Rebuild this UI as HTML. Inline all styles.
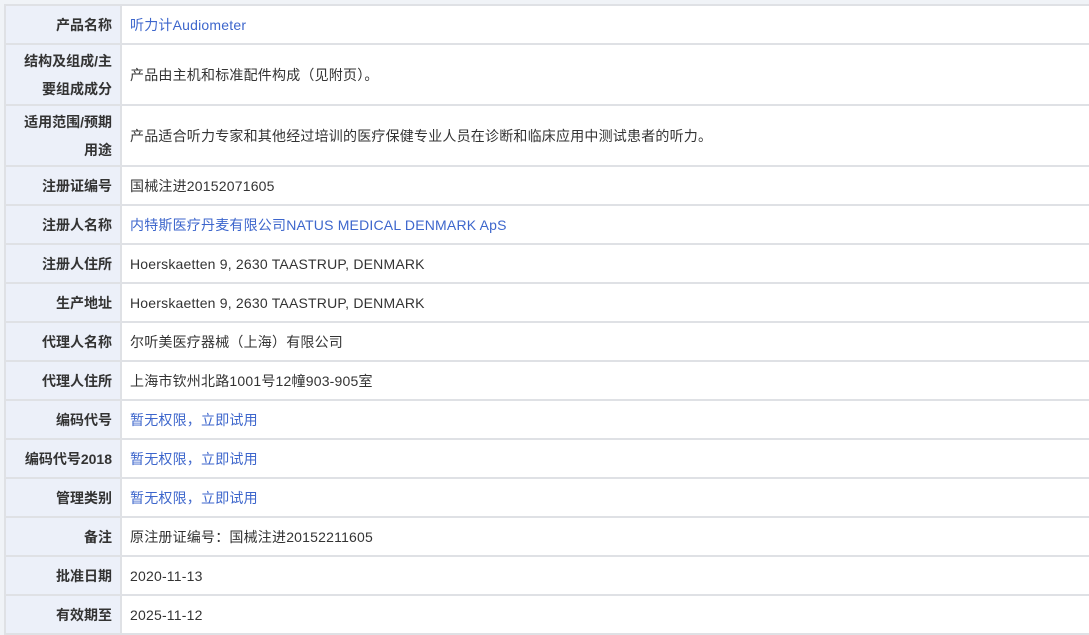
<!DOCTYPE html>
<html><head><meta charset="utf-8"><style>
html,body{margin:0;padding:0;background:#f0f3f7;width:1089px;height:630px;overflow:hidden;font-family:"Liberation Sans","Noto Sans CJK SC",sans-serif;font-size:14px;color:#333}
table{position:absolute;left:4px;top:4px;border-collapse:collapse;width:1090px;background:#fff;table-layout:fixed}
td{border:2px solid #dfe1e5;height:37px;padding:0;line-height:22px}
col.a{width:116px}
td.l{background:#ecf0f9;font-weight:bold;text-align:right;padding:0 8px 0 6px;color:#333}
td.v{padding-left:8px;letter-spacing:0.2px}
tr.t td{height:59px;line-height:28px}
.b{color:#3d66cc}
</style></head><body>
<table>
<colgroup><col class="a"><col></colgroup>
<tr><td class="l">产品名称</td><td class="v b">听力计Audiometer</td></tr>
<tr class="t"><td class="l">结构及组成/主要组成成分</td><td class="v">产品由主机和标准配件构成（见附页）。</td></tr>
<tr class="t"><td class="l">适用范围/预期用途</td><td class="v">产品适合听力专家和其他经过培训的医疗保健专业人员在诊断和临床应用中测试患者的听力。</td></tr>
<tr><td class="l">注册证编号</td><td class="v">国械注进20152071605</td></tr>
<tr><td class="l">注册人名称</td><td class="v b">内特斯医疗丹麦有限公司NATUS MEDICAL DENMARK ApS</td></tr>
<tr><td class="l">注册人住所</td><td class="v">Hoerskaetten 9, 2630 TAASTRUP, DENMARK</td></tr>
<tr><td class="l">生产地址</td><td class="v">Hoerskaetten 9, 2630 TAASTRUP, DENMARK</td></tr>
<tr><td class="l">代理人名称</td><td class="v">尔听美医疗器械（上海）有限公司</td></tr>
<tr><td class="l">代理人住所</td><td class="v">上海市钦州北路1001号12幢903-905室</td></tr>
<tr><td class="l">编码代号</td><td class="v b">暂无权限，立即试用</td></tr>
<tr><td class="l">编码代号2018</td><td class="v b">暂无权限，立即试用</td></tr>
<tr><td class="l">管理类别</td><td class="v b">暂无权限，立即试用</td></tr>
<tr><td class="l">备注</td><td class="v">原注册证编号：国械注进20152211605</td></tr>
<tr><td class="l">批准日期</td><td class="v">2020-11-13</td></tr>
<tr><td class="l">有效期至</td><td class="v">2025-11-12</td></tr>
</table>
</body></html>
